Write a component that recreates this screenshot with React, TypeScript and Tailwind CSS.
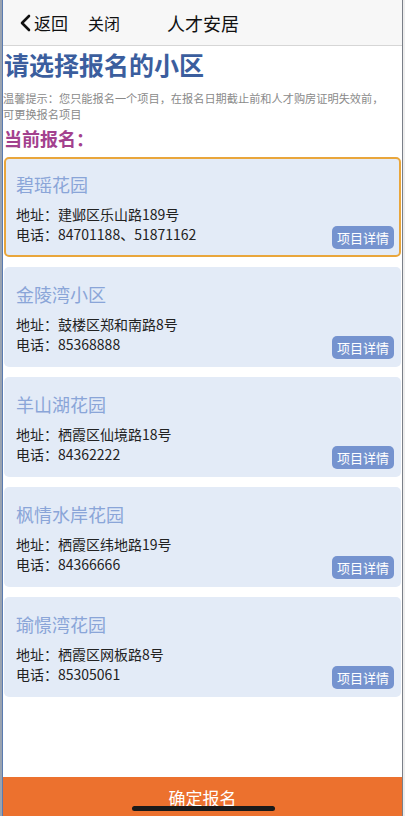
import React from "react";

const items = [
  { name: "碧瑶花园", addr: "建邺区乐山路189号", tel: "84701188、51871162", active: true },
  { name: "金陵湾小区", addr: "鼓楼区郑和南路8号", tel: "85368888" },
  { name: "羊山湖花园", addr: "栖霞区仙境路18号", tel: "84362222" },
  { name: "枫情水岸花园", addr: "栖霞区纬地路19号", tel: "84366666" },
  { name: "瑜憬湾花园", addr: "栖霞区网板路8号", tel: "85305061" },
];

export default function App() {
  return (
    <div
      className="flex h-[816px] w-[405px] overflow-hidden bg-white"
      style={{ fontFamily: '"Noto Sans CJK SC", "Noto Sans", sans-serif' }}
    >
      <div className="w-[2px] bg-[#9aa3b0]" />
      <div className="relative flex flex-1 flex-col border-l border-r border-l-[#5a7bb0] border-r-[#7a7f88]">
        {/* header */}
        <div className="flex h-[46px] items-center border-b border-[#d6d6d6] bg-[#f7f7f7] text-[#111]">
          <div className="ml-[15px] flex items-center">
            <svg width="14" height="18" viewBox="0 0 14 18" className="mr-[2px]">
              <polyline points="11,2 4,9 11,16" fill="none" stroke="#111" strokeWidth="2.6" strokeLinecap="round" strokeLinejoin="round" />
            </svg>
            <span className="text-[17px] leading-none">返回</span>
          </div>
          <span className="ml-[20px] text-[16px] leading-none">关闭</span>
          <span className="ml-[47px] text-[18px] leading-none">人才安居</span>
        </div>

        {/* content */}
        <div className="flex flex-1 flex-col">
          <div className="mt-[3px] pl-[1px] text-[25px] font-bold leading-[30px] text-[#3b5e9e]">请选择报名的小区</div>
          <div className="mt-[11px] flex flex-col text-[11.2px] leading-[16px] text-[#8a8a8a]">
            <span>温馨提示：您只能报名一个项目，在报名日期截止前和人才购房证明失效前，</span>
            <span>可更换报名项目</span>
          </div>
          <div className="mt-[4px] pl-[1px] text-[18px] font-bold leading-[24px] text-[#a3418e]">当前报名：</div>

          <div className="mt-[7px] flex flex-col gap-[10px] px-[1px]">
            {items.map((it) => (
              <div
                key={it.name}
                className={
                  "flex h-[100px] items-end justify-between rounded-[5px] border-2 bg-[#e3ebf7] pb-[6px] pl-[10px] pr-[5px] pt-[12px] " +
                  (it.active ? "border-[#e9a63c]" : "border-transparent")
                }
              >
                <div className="flex flex-col">
                  <div className="text-[18px] leading-[26px] text-[#8aa5d8]">{it.name}</div>
                  <div className="mt-[7px] text-[14px] leading-[20px] text-[#222]">地址：{it.addr}</div>
                  <div className="mb-[5px] text-[14px] leading-[20px] text-[#222]">电话：{it.tel}</div>
                </div>
                <div className="flex h-[23px] items-center rounded-[5px] bg-[#7593cf] px-[5px] text-[13px] leading-none text-white">
                  项目详情
                </div>
              </div>
            ))}
          </div>
        </div>

        {/* footer */}
        <div className="flex h-[39px] items-start justify-center bg-[#ec712e] pt-[11px] text-[17px] leading-[20px] text-white">
          确定报名
        </div>
        <div className="absolute bottom-[5px] left-[129px] h-[5px] w-[143px] rounded-full bg-[#1a1a1a]" />
      </div>
      <div className="w-[2px] bg-[#eeeeee]" />
    </div>
  );
}
